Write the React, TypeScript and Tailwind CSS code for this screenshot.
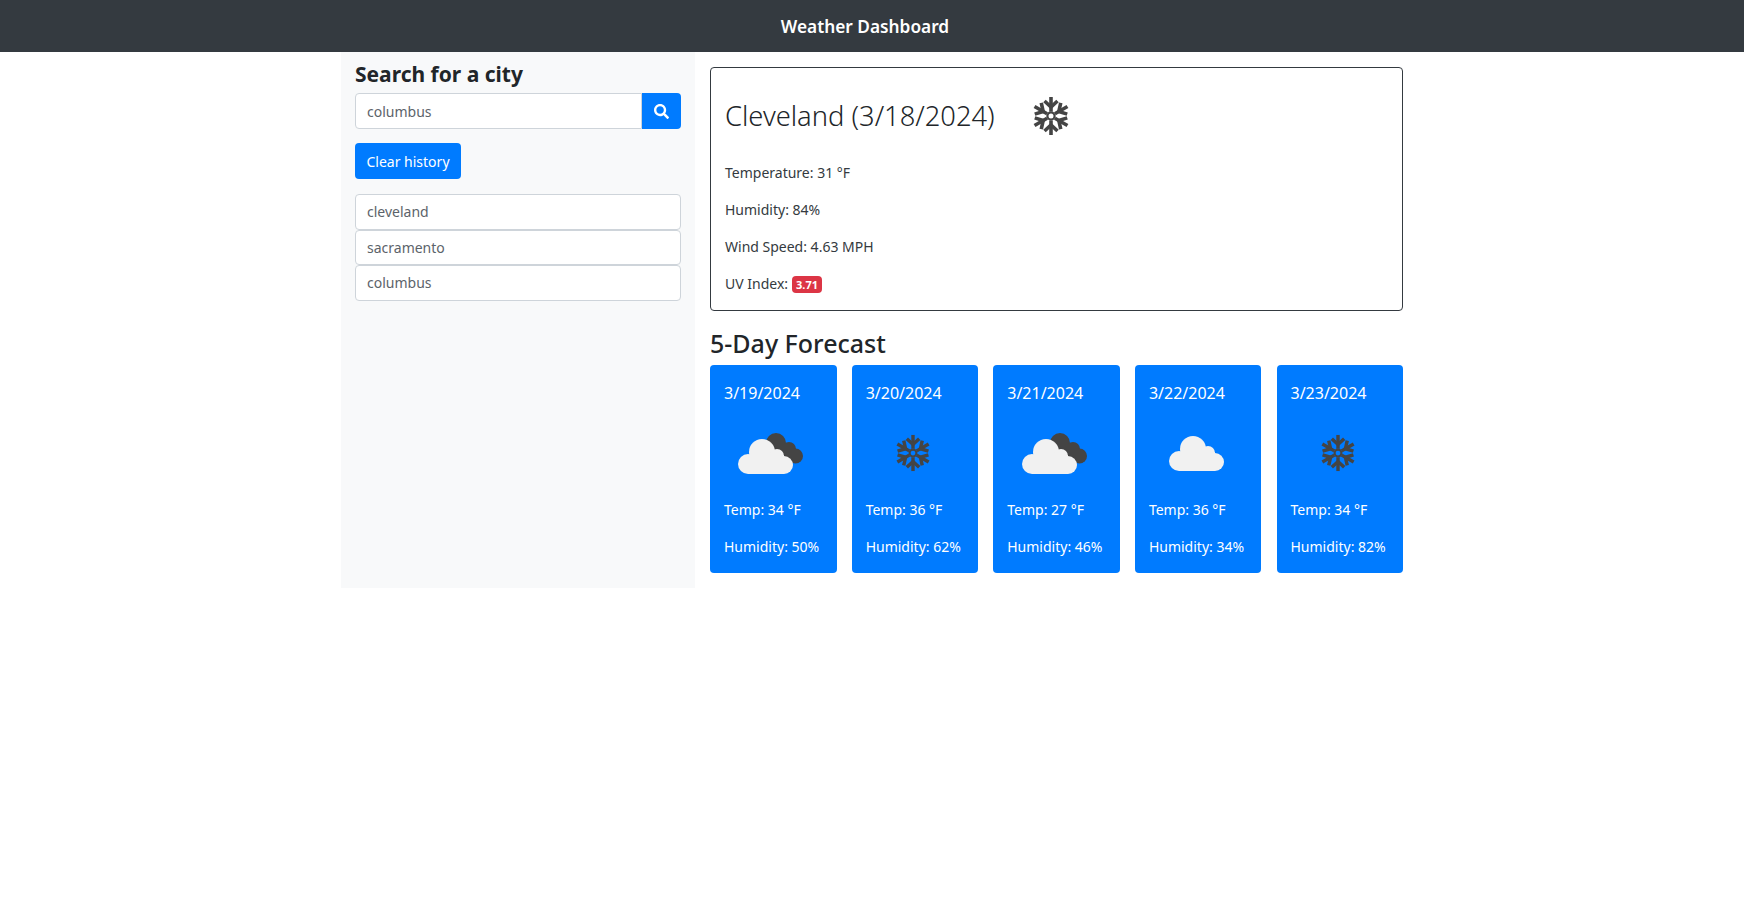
import { FaSearch } from 'react-icons/fa';

const forecast = [
  { date: '3/19/2024', icon: 'clouds', temp: 34, humidity: 50 },
  { date: '3/20/2024', icon: 'snow', temp: 36, humidity: 62 },
  { date: '3/21/2024', icon: 'clouds', temp: 27, humidity: 46 },
  { date: '3/22/2024', icon: 'cloud', temp: 36, humidity: 34 },
  { date: '3/23/2024', icon: 'snow', temp: 34, humidity: 82 },
];

const history = ['cleveland', 'sacramento', 'columbus'];

function Snowflake({ size }: { size: number }) {
  const arms = [0, 60, 120, 180, 240, 300];
  return (
    <svg width={size} height={size} viewBox="0 0 40 40" fill="none">
      {arms.map((a) => (
        <g key={a} transform={`rotate(${a} 20 20)`} stroke="#444444" strokeWidth="3.6">
          <path d="M20 15.5V1" />
          <path d="M13.5 5L20 11L26.5 5" />
        </g>
      ))}
      <circle cx="20" cy="20" r="3.6" stroke="#444444" strokeWidth="2.2" />
    </svg>
  );
}

// white cloud shared by the cloud icons, drawn in a 55x35 box
function CloudShape() {
  return (
    <g fill="#f1f1f1">
      <circle cx="10" cy="25" r="10" />
      <circle cx="24" cy="13" r="13" />
      <circle cx="39" cy="17" r="7" />
      <circle cx="46" cy="26" r="9" />
      <rect x="10" y="16" width="36" height="19" />
    </g>
  );
}

function Cloud() {
  return (
    <svg width="55" height="35" viewBox="0 0 55 35">
      <CloudShape />
    </svg>
  );
}

function Clouds() {
  return (
    <svg width="66" height="41" viewBox="0 -6 66 41">
      <g fill="#444444">
        <circle cx="38" cy="4" r="10" />
        <circle cx="51" cy="10" r="7" />
        <circle cx="57.5" cy="17" r="7.5" />
        <rect x="36" y="6" width="20" height="18" />
      </g>
      <CloudShape />
    </svg>
  );
}

function WeatherIcon({ name }: { name: string }) {
  if (name === 'snow') return <Snowflake size={38} />;
  if (name === 'cloud') return <Cloud />;
  return <Clouds />;
}

export default function App() {
  return (
    <div className="min-h-[899px] w-full bg-white font-['Noto_Sans','Open_Sans',sans-serif] text-[14px] text-[#212529]">
      <header className="flex h-[52px] items-center justify-center bg-[#343a40] pt-[2px] pr-[14px]">
        <h1 className="text-[17.3px] font-semibold text-white">Weather Dashboard</h1>
      </header>

      <div className="mx-auto flex w-[1062px]">
        {/* Sidebar */}
        <aside className="h-[536px] w-[354px] bg-[#f8f9fa] px-[14px]">
          <h2 className="mt-[6px] text-[21px] leading-[32px] font-bold">Search for a city</h2>
          <div className="mt-[3px] flex h-[36px]">
            <div className="flex flex-1 items-center rounded-l border border-[#ced4da] bg-white pl-[11px] text-[#5c636a]">
              columbus
            </div>
            <button className="flex w-[39px] items-center justify-center rounded-r bg-[#007bff] text-white">
              <FaSearch size={15} />
            </button>
          </div>
          <button className="mt-[14px] flex h-[36px] w-[106px] items-center justify-center rounded bg-[#007bff] text-white">
            Clear history
          </button>
          <ul className="mt-[15px] flex flex-col">
            {history.map((city) => (
              <li
                key={city}
                className="flex h-[35.5px] items-center rounded border border-[#ced4da] bg-white pl-[11px] text-[#5c636a]"
              >
                {city}
              </li>
            ))}
          </ul>
        </aside>

        {/* Main */}
        <main className="flex-1 pl-[15px]">
          <section className="mt-[15px] h-[244px] rounded border border-[#343a40] px-[14px]">
            <div className="flex h-[93px] items-center pt-[2px]">
              <h2 className="w-[306px] text-[27.3px] leading-[40px] font-light">Cleveland (3/18/2024)</h2>
              <Snowflake size={40} />
            </div>
            <div className="flex flex-col gap-[13px] text-[#343a40]">
              <p className="leading-[24px]">Temperature: 31 °F</p>
              <p className="leading-[24px]">Humidity: 84%</p>
              <p className="leading-[24px]">Wind Speed: 4.63 MPH</p>
              <p className="flex items-center leading-[24px]">
                UV Index:
                <span className="ml-[4px] rounded bg-[#dc3545] px-[4px] text-[11px] leading-[17px] font-bold text-white">
                  3.71
                </span>
              </p>
            </div>
          </section>

          <h3 className="mt-[12px] text-[25px] leading-[40px] font-medium">5-Day Forecast</h3>
          <div className="mt-[2px] flex justify-between">
            {forecast.map((day) => (
              <div key={day.date} className="h-[208px] w-[126.5px] rounded bg-[#007bff] px-[14px] text-white">
                <p className="mt-[16px] text-[16px] leading-[24px]">{day.date}</p>
                <div className="mt-[18px] flex h-[60px] items-center justify-center pr-[4px]">
                  <WeatherIcon name={day.icon} />
                </div>
                <p className="mt-[15px] leading-[24px]">Temp: {day.temp} °F</p>
                <p className="mt-[13px] leading-[24px]">Humidity: {day.humidity}%</p>
              </div>
            ))}
          </div>
        </main>
      </div>
    </div>
  );
}
